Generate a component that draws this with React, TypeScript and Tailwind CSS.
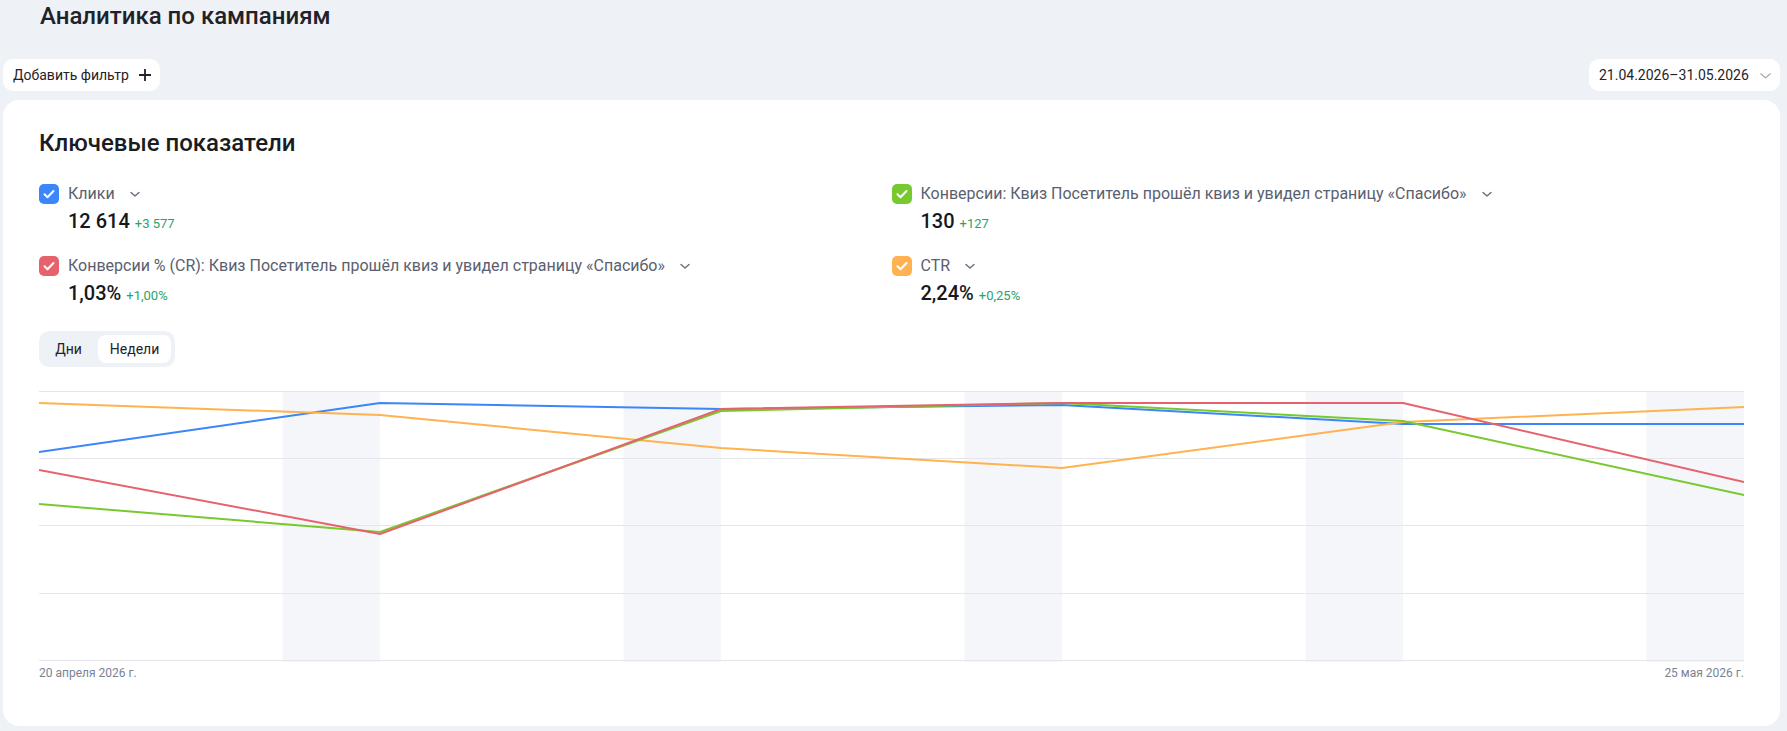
import React from "react";

type Metric = {
  label: string;
  value: string;
  delta: string;
  color: string;
};

const metrics: Metric[] = [
  { label: "Клики", value: "12 614", delta: "+3 577", color: "bg-[#3a86fa]" },
  {
    label: "Конверсии: Квиз Посетитель прошёл квиз и увидел страницу «Спасибо»",
    value: "130",
    delta: "+127",
    color: "bg-[#77c92e]",
  },
  {
    label: "Конверсии % (CR): Квиз Посетитель прошёл квиз и увидел страницу «Спасибо»",
    value: "1,03%",
    delta: "+1,00%",
    color: "bg-[#e6636e]",
  },
  { label: "CTR", value: "2,24%", delta: "+0,25%", color: "bg-[#ffb24f]" },
];

const W = 1705;
const H = 271;
const xs = [0, 341, 682, 1023, 1364, 1705];
const series = [
  { stroke: "#3a86fa", ys: [61, 12, 18, 14, 33, 33] },
  { stroke: "#ffb24f", ys: [12, 24, 57, 77, 31, 16] },
  { stroke: "#77c92e", ys: [113, 141, 20, 12, 30, 104] },
  { stroke: "#e6636e", ys: [79, 143, 18, 12, 12, 91] },
];

const Chevron = ({ className }: { className?: string }) => (
  <svg width="12" height="12" viewBox="0 0 12 12" className={className}>
    <path d="M2 4.5l4 3.5 4-3.5" fill="none" stroke="currentColor" strokeWidth="1.5" strokeLinecap="round" strokeLinejoin="round" />
  </svg>
);

const MetricItem = ({ m }: { m: Metric }) => (
  <div className="flex flex-col">
    <div className="flex items-center h-5">
      <span className={`w-5 h-5 rounded-[5px] flex items-center justify-center ${m.color}`}>
        <svg width="16" height="16" viewBox="0 0 16 16">
          <path d="M3.5 8.3l3 3L12.5 5" fill="none" stroke="white" strokeWidth="2" strokeLinecap="round" strokeLinejoin="round" />
        </svg>
      </span>
      <span className="ml-[9px] text-[16px] leading-5 text-[#5a606e] whitespace-nowrap">{m.label}</span>
      <Chevron className="ml-[14px] text-[#6b7180]" />
    </div>
    <div className="pl-[29px] mt-[5px] flex items-baseline gap-[5px] h-6">
      <span className="text-[20px] leading-6 font-medium text-[#16181d]">{m.value}</span>
      <span className="text-[13px] text-[#27a567]">{m.delta}</span>
    </div>
  </div>
);

const Chart = () => {
  const day = W / 35;
  return (
    <svg width={W} height={H} viewBox={`0 0 ${W} ${H}`} className="block">
      {[0, 1, 2, 3, 4].map((i) => (
        <rect key={i} x={xs[i] + day * 5} y={0} width={day * 2} height={H} fill="#f5f6fa" />
      ))}
      {[0.5, 67.5, 134.5, 202.5, 269.5].map((y) => (
        <line key={y} x1={0} x2={W} y1={y} y2={y} stroke="#e4e6eb" strokeWidth="1" />
      ))}
      {series.map((s) => (
        <polyline
          key={s.stroke}
          points={s.ys.map((y, i) => `${xs[i]},${y}`).join(" ")}
          fill="none"
          stroke={s.stroke}
          strokeWidth="2"
          strokeLinejoin="round"
        />
      ))}
    </svg>
  );
};

export default function App() {
  return (
    <div className="min-h-screen bg-[#eef1f6] pl-[3px] pr-[7px] font-['Roboto',sans-serif]">
      <h1 className="pt-[2px] pl-[37px] text-[24px] leading-7 font-medium text-[#1f2229]">
        Аналитика по кампаниям
      </h1>

      <div className="mt-[29px] flex items-center justify-between">
        <button className="h-8 w-[157px] rounded-[10px] bg-white pl-[10px] flex items-center gap-[9px] text-[14px] text-[#1f2229]">
          Добавить фильтр
          <svg width="14" height="14" viewBox="0 0 14 14">
            <path d="M7 1v12M1 7h12" stroke="#1f2229" strokeWidth="1.8" />
          </svg>
        </button>
        <button className="h-8 w-[191px] rounded-[10px] bg-white pl-[10px] flex items-center gap-[10px] text-[14px] text-[#1f2229]">
          21.04.2026–31.05.2026
          <svg width="13" height="13" viewBox="0 0 13 13">
            <path d="M1.5 4.5l5 4.5 5-4.5" fill="none" stroke="#a3a9b6" strokeWidth="1.3" />
          </svg>
        </button>
      </div>

      <div className="mt-[9px] bg-white rounded-[16px] pt-[29px] px-[36px] pb-[45px]">
        <h2 className="text-[24px] leading-7 font-medium text-[#1a1c21]">Ключевые показатели</h2>

        <div className="mt-[27px] grid grid-cols-2 gap-y-[23px]">
          {metrics.map((m) => (
            <MetricItem key={m.label} m={m} />
          ))}
        </div>

        <div className="mt-[26px] inline-flex items-center gap-1 p-1 rounded-[10px] bg-[#eef1f6] text-[14px] text-[#1f2229]">
          <button className="h-7 w-[51px] rounded-[8px]">Дни</button>
          <button className="h-7 w-[73px] rounded-[8px] bg-white">Недели</button>
        </div>

        <div className="mt-[24px]">
          <Chart />
          <div className="mt-[3px] flex justify-between text-[12px] leading-4 text-[#7b8294]">
            <span>20 апреля 2026 г.</span>
            <span>25 мая 2026 г.</span>
          </div>
        </div>
      </div>
    </div>
  );
}
